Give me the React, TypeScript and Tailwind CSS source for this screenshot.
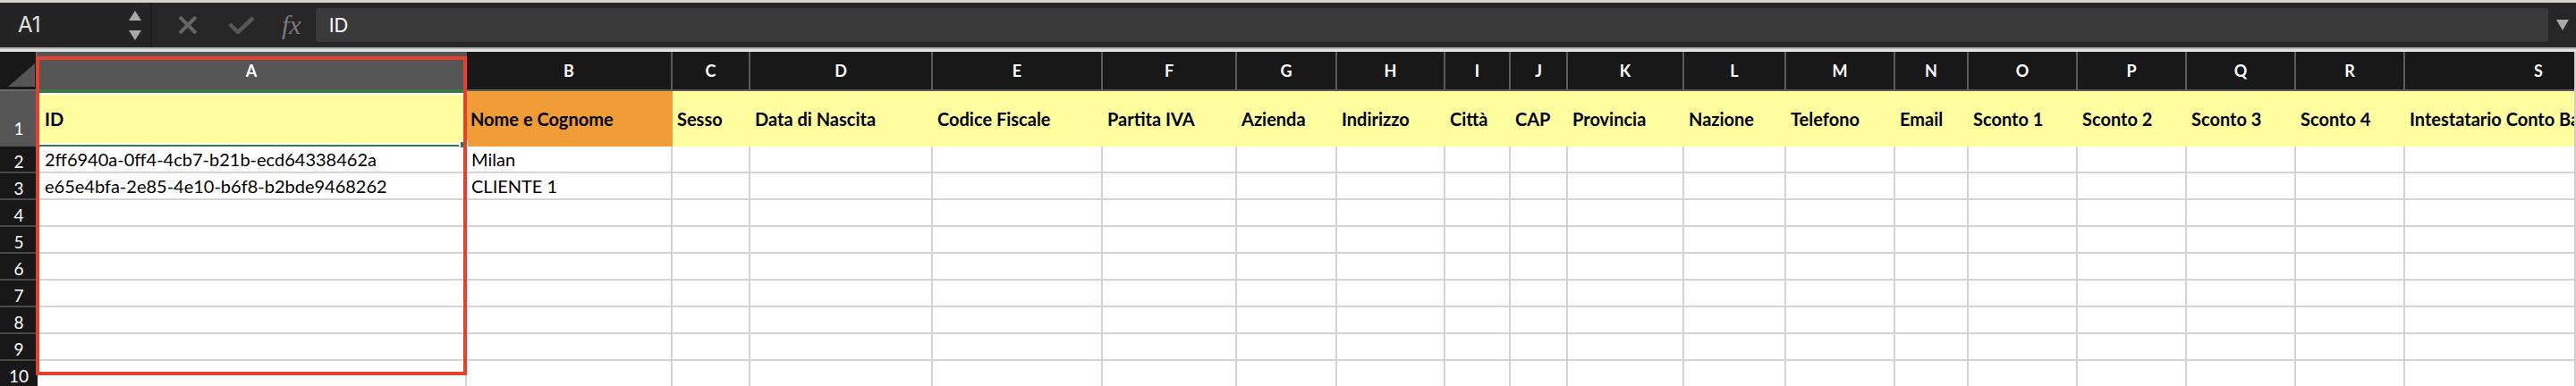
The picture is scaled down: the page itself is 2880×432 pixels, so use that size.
import React from "react";

const GRID =
  "grid grid-cols-[42px_480px_230px_87px_204px_190px_150px_112px_121px_73px_64px_130px_114px_122px_82px_122px_122px_122px_122px_300px]";

const COLUMNS = [
  { letter: "A", label: "ID" },
  { letter: "B", label: "Nome e Cognome" },
  { letter: "C", label: "Sesso" },
  { letter: "D", label: "Data di Nascita" },
  { letter: "E", label: "Codice Fiscale" },
  { letter: "F", label: "Partita IVA" },
  { letter: "G", label: "Azienda" },
  { letter: "H", label: "Indirizzo" },
  { letter: "I", label: "Città" },
  { letter: "J", label: "CAP" },
  { letter: "K", label: "Provincia" },
  { letter: "L", label: "Nazione" },
  { letter: "M", label: "Telefono" },
  { letter: "N", label: "Email" },
  { letter: "O", label: "Sconto 1" },
  { letter: "P", label: "Sconto 2" },
  { letter: "Q", label: "Sconto 3" },
  { letter: "R", label: "Sconto 4" },
  { letter: "S", label: "Intestatario Conto Bancario" },
];

const DATA: Record<number, string[]> = {
  2: ["2ff6940a-0ff4-4cb7-b21b-ecd64338462a", "Milan"],
  3: ["e65e4bfa-2e85-4e10-b6f8-b2bde9468262", "CLIENTE 1"],
};

const ROWS = [2, 3, 4, 5, 6, 7, 8, 9, 10];

function FormulaBar() {
  return (
    <div className="flex h-[50px] items-center bg-[#262626]">
      <div className="flex h-full w-[170px] items-center justify-between border-r-2 border-[#1e1e1e] bg-[#242424] pl-[20px] pr-[10px]">
        <span className="font-['Inter',sans-serif] text-[24px] text-[#e4e4e4]">A1</span>
        <div className="flex flex-col gap-[11px]">
          <svg width="14" height="11" viewBox="0 0 14 11">
            <polygon points="7,0 14,11 0,11" fill="#a9a9a9" />
          </svg>
          <svg width="14" height="11" viewBox="0 0 14 11">
            <polygon points="0,0 14,0 7,11" fill="#a9a9a9" />
          </svg>
        </div>
      </div>
      <div className="ml-[29px] flex items-center">
        <svg width="22" height="20" viewBox="0 0 22 20">
          <path d="M2 1 L20 19 M20 1 L2 19" stroke="#666666" strokeWidth="4" />
        </svg>
        <svg className="ml-[34px]" width="30" height="20" viewBox="0 0 30 20">
          <path d="M2 9 L11 18 L28 2" stroke="#575757" strokeWidth="4.5" fill="none" />
        </svg>
        <span className="ml-[30px] font-['Liberation_Serif',serif] text-[30px] italic leading-none text-[#7a7a7a]">
          fx
        </span>
      </div>
      <div className="ml-[16px] flex h-[38px] flex-1 items-center rounded-[2px] bg-[#3a3a3a] pl-[15px]">
        <span className="font-['Inter',sans-serif] text-[22px] text-white">ID</span>
      </div>
      <div className="flex w-[31px] justify-center">
        <svg width="14" height="12" viewBox="0 0 14 12">
          <polygon points="0,0 14,0 7,12" fill="#a9a9a9" />
        </svg>
      </div>
    </div>
  );
}

function Corner() {
  return (
    <div className="relative h-[44px] border-b-2 border-r-2 border-[#6b6b6b] bg-[#181818]">
      <svg className="absolute bottom-[3px] right-[1px]" width="30" height="26" viewBox="0 0 30 26">
        <polygon points="0,26 30,0 30,26" fill="#555555" />
      </svg>
    </div>
  );
}

export default function App() {
  return (
    <div className="relative h-[432px] w-[2880px] overflow-hidden bg-white font-['Lato',sans-serif]">
      <div className="h-[3px] bg-[#d7d3c7]" />
      <FormulaBar />
      <div className="h-[5px] border-t-2 border-[#b3b3b3] bg-[#e2e2e2]" />

      <div className="overflow-hidden border-r-2 border-[#cfcfcf]">
        {/* column letters */}
        <div className={GRID}>
          <Corner />
          {COLUMNS.map((c, i) => (
            <div
              key={c.letter}
              className={
                i === 0
                  ? "flex h-[44px] items-center justify-center border-b-2 border-r-2 border-b-[#3b7a48] border-r-[#555555] bg-[#555555] text-[18px] font-bold text-white"
                  : "flex h-[44px] items-center justify-center border-b-2 border-r-2 border-[#5a5a5a] bg-[#181818] text-[18px] font-bold text-white"
              }
            >
              {c.letter}
            </div>
          ))}
        </div>

        {/* row 1: headers */}
        <div className={GRID}>
          <div className="flex h-[62px] items-end justify-center bg-[#555555] pb-[6px] text-[19px] text-white">1</div>
          {COLUMNS.map((c, i) =>
            i === 0 ? (
              <div key={c.letter} className="h-[62px] border-y-2 border-[#3b7a48]">
                <div className="flex h-full items-center border-y-2 border-white bg-[#ffff9f] pl-[8px] text-[20px] font-bold text-black">
                  {c.label}
                </div>
              </div>
            ) : (
              <div
                key={c.letter}
                className={
                  i === 1
                    ? "flex h-[62px] items-center overflow-hidden whitespace-nowrap bg-[#f09d38] pl-[4px] text-[20px] font-bold text-black"
                    : "flex h-[62px] items-center overflow-hidden whitespace-nowrap bg-[#ffff9f] pl-[5px] text-[20px] font-bold text-black"
                }
              >
                {c.label}
              </div>
            )
          )}
        </div>

        {/* data rows */}
        {ROWS.map((r) => (
          <div key={r} className={GRID}>
            <div className="flex h-[30px] items-end justify-center border-b-2 border-[#4a4a4a] bg-[#181818] pb-[2px] text-[19px] leading-none text-white">
              {r}
            </div>
            {COLUMNS.map((c, i) => (
              <div
                key={c.letter}
                className={
                  i === 0
                    ? "flex h-[30px] items-center overflow-hidden whitespace-nowrap border-b-2 border-r-2 border-[#d4d4d4] pl-[8px] text-[20px] text-black"
                    : "flex h-[30px] items-center overflow-hidden whitespace-nowrap border-b-2 border-r-2 border-[#d4d4d4] pl-[5px] text-[20px] text-black"
                }
              >
                {DATA[r]?.[i] ?? ""}
              </div>
            ))}
          </div>
        ))}
      </div>

      {/* fill handle of the selected cell */}
      <div className="absolute left-[513px] top-[157px] h-[10px] w-[10px] border-2 border-white bg-[#3b7a48]" />
      {/* red annotation box round column A */}
      <div className="pointer-events-none absolute left-[40px] top-[63px] h-[357px] w-[482px] border-[4px] border-[#e8402a]" />
    </div>
  );
}
